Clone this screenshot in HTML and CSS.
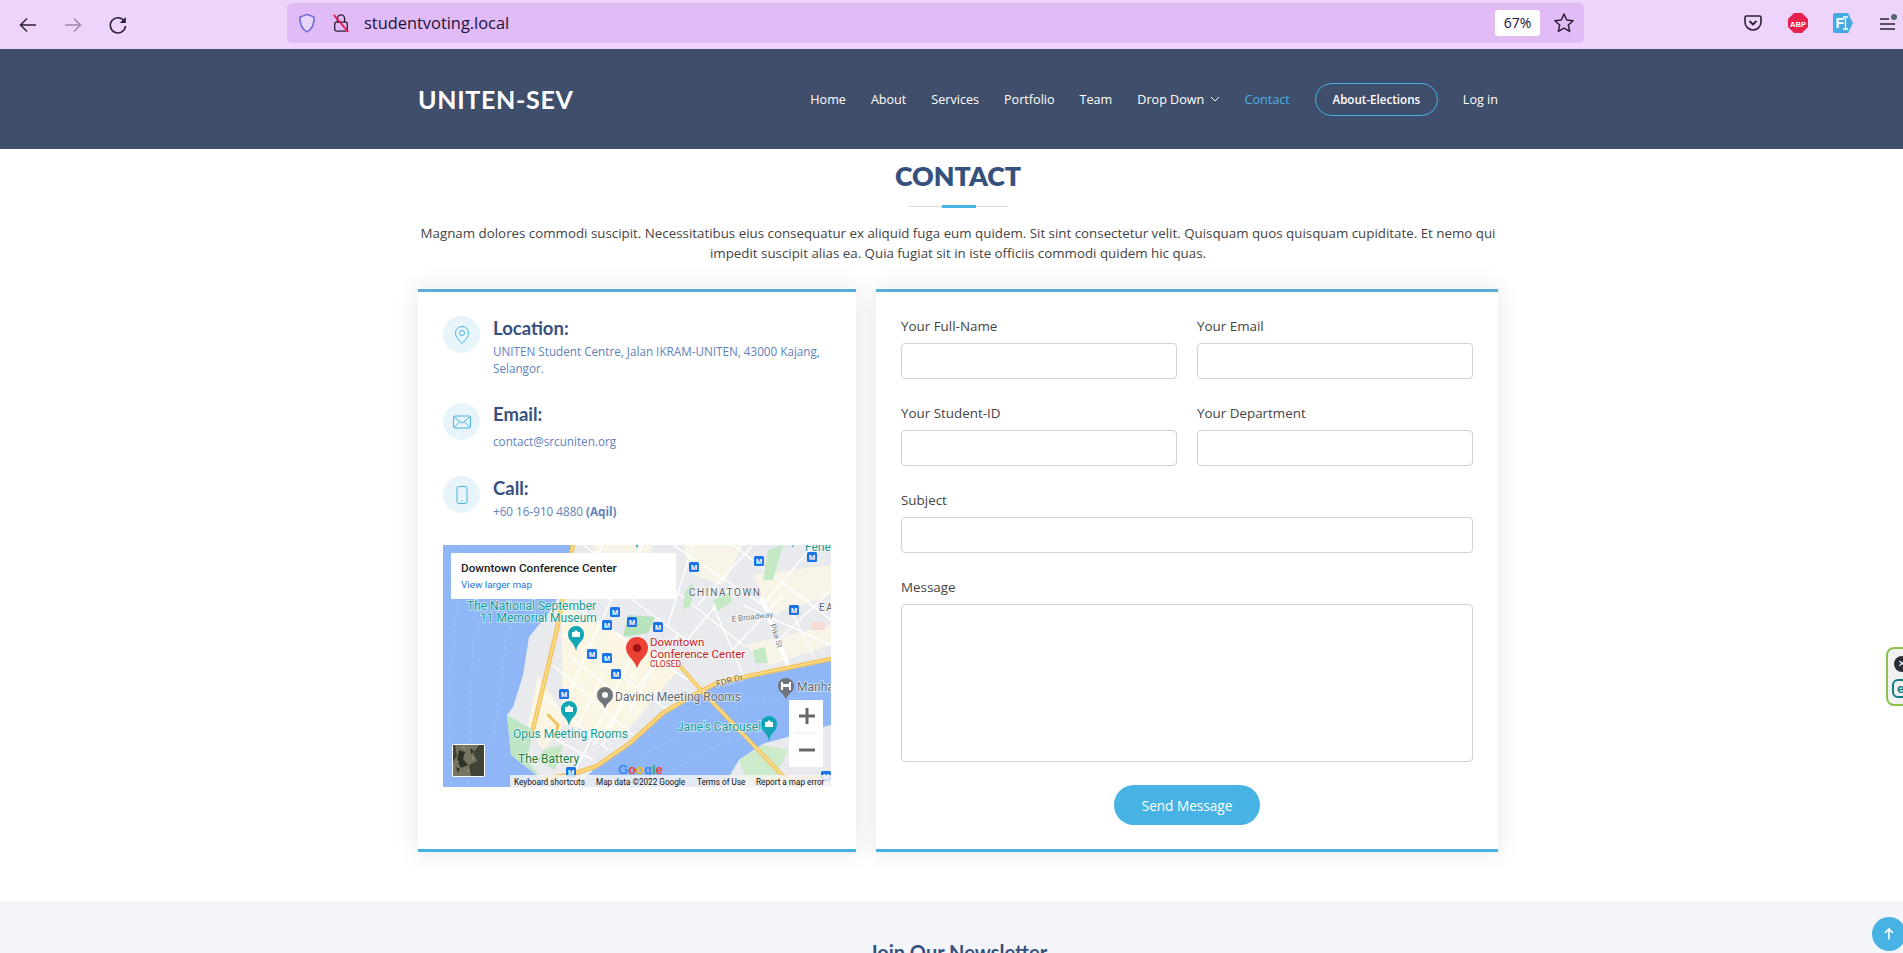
FILE: index.html
```html
<!DOCTYPE html>
<html lang="en">
<head>
<meta charset="utf-8">
<title>UNITEN-SEV Contact</title>
<link rel="stylesheet" href="styles.css">
</head>
<body>
<div class="toolbar">
  <div class="tb-nav">
    <svg class="tb-icon" viewBox="0 0 20 20"><path d="M18 10H2.500M9 3.500 2.500 10 9 16.500" fill="none" stroke="#2b1f33" stroke-width="1.500"/></svg>
    <svg class="tb-icon faded" viewBox="0 0 20 20"><path d="M2 10h15.500M11 3.500l6.500 6.500-6.500 6.500" fill="none" stroke="#2b1f33" stroke-width="1.500"/></svg>
    <svg class="tb-icon" viewBox="0 0 20 20"><path d="M16.500 6.500A7.600 7.600 0 1 0 17.500 11" fill="none" stroke="#2b1f33" stroke-width="1.600"/><path d="M17.800 2v6h-6z" fill="#2b1f33"/></svg>
  </div>
  <div class="urlbar">
    <svg class="shield" viewBox="0 0 20 22"><path d="M10 1.500 18 4.500c0 8-2 13-8 16.500C4 17.500 2 12.500 2 4.500z" fill="#e9d3fb" stroke="#5f63d8" stroke-width="1.600"/></svg>
    <svg class="lock" viewBox="0 0 20 22"><path d="M6 10V6a4 4 0 0 1 8 0v4" fill="none" stroke="#2b1f33" stroke-width="1.500"/><rect x="3" y="10" width="14" height="10" rx="2" fill="none" stroke="#2b1f33" stroke-width="1.500"/><path d="M2 2 18 21" stroke="#e5194f" stroke-width="2"/></svg>
    <span class="url">studentvoting.local</span>
    <span class="zoom-chip">67%</span>
    <svg class="star" viewBox="0 0 22 22"><path d="m11 2 2.700 6 6.500.7-4.900 4.300 1.400 6.400L11 16.100 5.300 19.400l1.400-6.400L1.800 8.700 8.300 8z" fill="none" stroke="#2b1f33" stroke-width="1.500" stroke-linejoin="round"/></svg>
  </div>
  <div class="tb-ext">
    <svg class="ext" viewBox="0 0 20 20"><path d="M3.500 3h13A1.500 1.500 0 0 1 18 4.500V9a8 8 0 0 1-16 0V4.500A1.500 1.500 0 0 1 3.500 3z" fill="none" stroke="#2b1f33" stroke-width="1.600"/><path d="m6.500 8 3.500 3.500L13.500 8" fill="none" stroke="#2b1f33" stroke-width="1.800"/></svg>
    <svg class="ext" viewBox="0 0 20 20"><path d="M6 0h8l6 6v8l-6 6H6l-6-6V6z" fill="#e8214f"/><text x="10" y="13.500" class="abp">ABP</text></svg>
    <svg class="ext" viewBox="0 0 20 20"><path d="M2 0h13l5 10-5 10H2a2 2 0 0 1-2-2V2a2 2 0 0 1 2-2z" fill="#47a9e4"/><text x="2.500" y="15" class="fi">F</text><path d="M10 4h5M10 16h5M12.500 4v12" stroke="#fff" stroke-width="1.300"/></svg>
    <svg class="ext burger" viewBox="0 0 20 20"><path d="M2 6h9M2 11h15M2 16h15" stroke="#2b1f33" stroke-width="1.500"/><circle cx="16" cy="4" r="3" fill="#4d6a6a"/></svg>
  </div>
</div>

<header class="site-header">
  <div class="container header-row">
    <a class="brand">UNITEN-SEV</a>
    <nav class="main-nav">
      <a>Home</a>
      <a>About</a>
      <a>Services</a>
      <a>Portfolio</a>
      <a>Team</a>
      <a class="drop">Drop Down <svg class="chev" viewBox="0 0 10 6"><path d="m1 1 4 4 4-4" fill="none" stroke="#fff" stroke-width="1"/></svg></a>
      <a class="active">Contact</a>
      <a class="pill">About-Elections</a>
      <a>Log in</a>
    </nav>
  </div>
</header>

<main class="contact">
  <div class="container">
    <div class="section-title">
      <h2>CONTACT</h2>
      <div class="rule"><span></span></div>
      <p>Magnam dolores commodi suscipit. Necessitatibus eius consequatur ex aliquid fuga eum quidem. Sit sint consectetur velit. Quisquam quos quisquam cupiditate. Et nemo qui impedit suscipit alias ea. Quia fugiat sit in iste officiis commodi quidem hic quas.</p>
    </div>
    <div class="contact-grid">
      <section class="card info">
        <div class="info-item">
          <span class="info-icon"><svg viewBox="0 0 20 20"><path d="M10 1.500a6.500 6.500 0 0 0-6.500 6.500c0 4 3.500 7.500 6.500 10.500 3-3 6.500-6.500 6.500-10.500A6.500 6.500 0 0 0 10 1.500z" fill="none" stroke="#47b2e4" stroke-width="1"/><circle cx="10" cy="8" r="2.500" fill="none" stroke="#47b2e4" stroke-width="1"/></svg></span>
          <div class="info-text">
            <h4>Location:</h4>
            <p>UNITEN Student Centre, Jalan IKRAM-UNITEN, 43000 Kajang, Selangor.</p>
          </div>
        </div>
        <div class="info-item">
          <span class="info-icon"><svg viewBox="0 0 20 20"><rect x="1.500" y="4" width="17" height="12" rx="1.500" fill="none" stroke="#47b2e4" stroke-width="1"/><path d="m1.800 5 8.200 6 8.200-6M2 15.500l5.800-6M18 15.500l-5.800-6" fill="none" stroke="#47b2e4" stroke-width="1"/></svg></span>
          <div class="info-text email">
            <h4>Email:</h4>
            <p>contact@srcuniten.org</p>
          </div>
        </div>
        <div class="info-item">
          <span class="info-icon"><svg viewBox="0 0 20 20"><rect x="5" y="1.500" width="10" height="17" rx="1.800" fill="none" stroke="#47b2e4" stroke-width="1"/><circle cx="10" cy="15.800" r=".7" fill="#47b2e4"/></svg></span>
          <div class="info-text">
            <h4>Call:</h4>
            <p>+60 16-910 4880 <b>(Aqil)</b></p>
          </div>
        </div>
        <svg class="map" viewBox="0 0 388 242">
          <defs>
            <g id="m"><rect x="-5" y="-5" width="10" height="10" rx="1.500" fill="#1a73e8"/><text x="0" y="3" class="mk">M</text></g>
            <g id="teal"><path d="M0 9C-2-1-8 0-8-8a8 8 0 0 1 16 0C8 0 2-1 0 9z" fill="#12a5b5"/><path d="M-4-5v-5h2l2-2 2 2h2v5z" fill="#fff"/></g>
          </defs>
          <rect width="388" height="242" fill="#e8eaed"/>
          <path d="M118 60 240 120 180 190 120 180ZM95 130 125 175 100 205 85 180Z" fill="#fbf6e4"/>
          <path d="M240 0h60l-20 40-30-10zM310 30l78-10v30l-60 20zM300 100l88-20v20l-60 20zM150 0h60l-10 30-40 20z" fill="#f8f4e8"/>
          <g stroke="#fff" stroke-width="1.500" fill="none">
            <path d="M130 60 245 135M120 90 225 165M110 120 190 190M100 150 165 205M170 40 270 115M200 20 300 100M230 0 335 70M290 0 388 75M150 200 235 90M175 40 120 160M200 90 130 230M240 100 290 40M280 115 340 50M330 100 388 45M250 0 225 80M310 0 255 60M370 0 320 60M300 60 388 100M140 0 210 50M160 0 130 50M200 0 165 55M270 60 300 130M345 60 370 110M125 110 200 170M160 130 130 190M105 190 150 215M190 130 160 200M215 110 185 170"/>
          </g>
          <path d="M318 52 348 128" stroke="#fff" stroke-width="4"/>
          <path d="M0 0H130L112 60 86 92 80 130 70 162 64 170 68 210 95 231 120 242H0z" fill="#8fb7f7"/>
          <path d="M388 112 320 128 274 138 254 148 220 168 187 198 154 221 134 242H280L296 215 320 199 388 180z" fill="#8fb7f7"/>
          <g stroke="#a6c4f8" stroke-width=".7" fill="none" stroke-dasharray="4 3"><path d="M55 0 30 100 25 242M90 0 62 100 50 200M20 0 8 120 8 242M200 210 290 160 380 150M230 225 320 175"/></g>
          <path d="M280 242 296 215 320 199 388 180V242z" fill="#e8eaed"/>
          <path d="M296 215 320 200 345 205 330 238 305 238z" fill="#cdeacb"/>
          <path d="M64 170 90 185 84 215 100 235 95 231 68 210z" fill="#bfe6c4"/>
          <path d="M100 205 120 200 112 225 95 215z" fill="#c5e8c5"/>
          <path d="M185 70 212 72 205 88 180 92z" fill="#b6e3ba"/>
          <path d="M242 46 250 38 248 60 240 65zM310 105 322 102 325 118 312 118zM270 55 285 48 290 56 275 66zM325 5 340 0 330 35 320 35z" fill="#c5e8c5"/>
          <rect x="368" y="77" width="14" height="8" fill="#f7dcd6"/>
          <g stroke="#f3c45c" fill="none" stroke-linejoin="round" stroke-linecap="round">
            <path d="M130 0 114 84 90 184" stroke-width="4.500"/>
            <path d="M388 114 320 128 274 138 254 148 220 168 187 198 154 221 130 229 100 234" stroke-width="4.500"/>
            <path d="M237 121 257 144 337 228 354 242" stroke-width="4"/>
            <path d="M105 170 115 180 112 192" stroke-width="3"/>
            <path d="M310 235 388 232" stroke-width="3"/>
          </g>
          <g stroke="#fbdd8e" fill="none" stroke-linejoin="round" stroke-linecap="round" stroke-width="1.600">
            <path d="M130 0 114 84 90 184"/>
            <path d="M388 114 320 128 274 138 254 148 220 168 187 198 154 221 130 229 100 234"/>
            <path d="M237 121 257 144 337 228 354 242"/>
          </g>
          <path d="M194 92a11 11 0 0 1 11 11c0 8-8 11-11 20-3-9-11-12-11-20a11 11 0 0 1 11-11z" fill="#ea4335"/>
          <circle cx="194" cy="103" r="4" fill="#a31512"/>
          <use href="#m" x="251" y="22"/><use href="#m" x="316" y="16"/><use href="#m" x="369" y="12"/>
          <use href="#m" x="172" y="67"/><use href="#m" x="189" y="77"/><use href="#m" x="164" y="80"/>
          <use href="#m" x="215" y="82"/><use href="#m" x="149" y="109"/><use href="#m" x="164" y="113"/>
          <use href="#m" x="173" y="129"/><use href="#m" x="121" y="149"/><use href="#m" x="128" y="227"/>
          <use href="#m" x="351" y="65"/><use href="#m" x="383" y="231"/>
          <use href="#teal" x="133" y="97"/><use href="#teal" x="126" y="172"/><use href="#teal" x="326" y="187"/><use href="#teal" x="194" y="-5"/><use href="#teal" x="350" y="-6"/>
          <path d="M162 164c-2-8-8-7-8-14a8 8 0 0 1 16 0c0 7-6 6-8 14z" fill="#70757a"/><circle cx="162" cy="150" r="3" fill="#fff"/>
          <path d="M343 155c-2-8-8-7-8-14a8 8 0 0 1 16 0c0 7-6 6-8 14z" fill="#70757a"/><path d="M338 137h2v2h6v-2h2v8h-2v-3h-6v3h-2z" fill="#fff"/>
          <text x="207" y="101" class="lbl red">Downtown</text>
          <text x="207" y="113" class="lbl red">Conference Center</text>
          <text x="207" y="122" class="lbl red small">CLOSED</text>
          <text x="246" y="51" class="lbl area">CHINATOWN</text>
          <text x="376" y="66" class="lbl area">EA</text>
          <text x="24" y="65" class="lbl teal">The National September</text>
          <text x="37" y="77" class="lbl teal">11 Memorial Museum</text>
          <text x="172" y="156" class="lbl gray">Davinci Meeting Rooms</text>
          <text x="70" y="193" class="lbl teal">Opus Meeting Rooms</text>
          <text x="234" y="186" class="lbl teal">Jane's Carousel</text>
          <text x="75" y="218" class="lbl green">The Battery</text>
          <text x="354" y="146" class="lbl gray">Manha</text>
          <text x="362" y="6" class="lbl teal">Fenel</text>
          <text transform="translate(289 77) rotate(-7)" class="lbl road">E Broadway</text>
          <text transform="translate(327 80) rotate(72)" class="lbl road">Pike St</text>
          <text transform="translate(274 142) rotate(-15)" class="lbl fdr">FDR Dr</text>
          <text x="175" y="229" class="goog"><tspan fill="#4285f4">G</tspan><tspan fill="#ea4335">o</tspan><tspan fill="#fbbc05">o</tspan><tspan fill="#4285f4">g</tspan><tspan fill="#34a853">l</tspan><tspan fill="#ea4335">e</tspan></text>
          <rect x="8" y="8" width="225" height="46" fill="#fff"/>
          <text x="18" y="27" class="card-title">Downtown Conference Center</text>
          <text x="18" y="43" class="card-link">View larger map</text>
          <rect x="9" y="199" width="33" height="33" rx="2" fill="#fff"/>
          <rect x="10" y="200" width="31" height="31" fill="#3f4436"/>
          <path d="M12 200h24l-6 8 4 8-8 4 2 11H10v-14l4-6z" fill="#77745f"/><path d="M16 205l6 2-2 7 5 6-7 3-4-7zM27 203l4 3-3 3zM13 222l4 2-2 4z" fill="#2f3329"/><path d="M19 201l3 3M29 212l2 2M14 216l2 1M24 225l2 1" stroke="#a9a690"/>
          <rect x="346" y="155" width="34" height="67" fill="#fff"/>
          <path d="M352 188h22" stroke="#e6e6e6"/>
          <path d="M356 171h16M364 163v16M356 205h16" stroke="#666" stroke-width="3"/>
          <path d="M67 230h321v12H67z" fill="#f5f5f5" fill-opacity=".85"/>
          <text x="71" y="240" class="attr">Keyboard shortcuts</text>
          <text x="153" y="240" class="attr">Map data ©2022 Google</text>
          <text x="254" y="240" class="attr">Terms of Use</text>
          <text x="313" y="240" class="attr">Report a map error</text>
        </svg>
      </section>

      <form class="card form">
        <div class="form-grid">
          <label class="field"><span>Your Full-Name</span><input type="text"></label>
          <label class="field"><span>Your Email</span><input type="text"></label>
          <label class="field"><span>Your Student-ID</span><input type="text"></label>
          <label class="field"><span>Your Department</span><input type="text"></label>
          <label class="field wide"><span>Subject</span><input type="text"></label>
          <label class="field wide"><span>Message</span><textarea></textarea></label>
        </div>
        <div class="form-actions"><button type="button">Send Message</button></div>
      </form>
    </div>
  </div>
</main>

<section class="newsletter">
  <h4>Join Our Newsletter</h4>
</section>

<div class="eset"><span class="eset-x">✕</span><span class="eset-e">e</span></div>
<a class="to-top"><svg viewBox="0 0 14 14"><path d="M7 12.500V2M3 6l4-4 4 4" fill="none" stroke="#fff" stroke-width="1.600"/></svg></a>
</body>
</html>
```
FILE: styles.css
```css
* { box-sizing: border-box; }
html, body { margin: 0; height: 953px; overflow: hidden; }
body { font-family: "Open Sans", sans-serif; color: #444; background: #fff; }

.toolbar { height: 49px; background: #eed4fb; display: flex; align-items: center; }
.tb-nav { width: 287px; display: flex; gap: 25px; padding-left: 18px; align-items: center; }
.tb-icon { width: 20px; height: 20px; }
.faded { opacity: .4; }
.urlbar { width: 1297px; height: 40px; background: #e1bbf6; border-radius: 5px; display: flex; align-items: center; padding: 0 9px 0 11px; margin-top: -4px; }
.shield { width: 18px; height: 20px; }
.lock { width: 18px; height: 20px; margin-left: 16px; }
.url { font-family: "Open Sans", sans-serif; font-size: 16.400px; color: #20123a; margin-left: 14px; flex: 1; }
.zoom-chip { width: 45px; height: 26px; background: #fff; border-radius: 3px; font-size: 14px; line-height: 26px; text-align: center; color: #20123a; }
.star { width: 22px; height: 22px; margin-left: 13px; }
.tb-ext { flex: 1; display: flex; align-items: center; justify-content: flex-end; gap: 25px; padding-right: 5px; margin-top: -4px; }
.ext { width: 20px; height: 20px; }
.abp { font: 700 7.500px "Liberation Sans", sans-serif; fill: #fff; text-anchor: middle; }
.fi { font: 700 14px "Liberation Sans", sans-serif; fill: #fff; }

.site-header { height: 100px; background: #3f4e6b; }
.container { width: 1080px; margin-left: 418px; }
.header-row { height: 100%; display: flex; align-items: center; justify-content: space-between; }
.brand { font-family: Lato, sans-serif; font-weight: 700; font-size: 25px; letter-spacing: .7px; color: #fff; }
.main-nav { display: flex; align-items: center; gap: 25px; }
.main-nav a { font-size: 12.600px; color: #fff; white-space: nowrap; }
.main-nav a.active { color: #47b2e4; }
.chev { width: 10px; height: 6px; margin: 0 0 2px 2px; }
.main-nav a.pill { height: 33px; width: 123px; border: 1px solid #47b2e4; border-radius: 17px; font-size: 11.600px; line-height: 31px; text-align: center; font-weight: 600; }

.contact { height: 752px; }
.section-title { text-align: center; }
.section-title h2 { margin: 0; padding-top: 8px; font-family: Lato, sans-serif; font-weight: 800; font-size: 26.700px; line-height: 38px; color: #37517e; }
.rule { position: relative; width: 100px; height: 1px; margin: 11px auto 0; background: #ddd; }
.rule span { position: absolute; left: 34px; top: -1px; width: 34px; height: 3px; background: #47b2e4; }
.section-title p { margin: 16px 0 0; font-size: 13.330px; line-height: 20px; color: #444; }

.contact-grid { display: grid; grid-template-columns: 438px 622px; gap: 20px; margin-top: 26px; height: 563px; }
.card { background: #fff; border-top: 3px solid #58aed3; border-bottom: 3px solid #47b2e4; box-shadow: 0 0 24px rgba(0,0,0,.1); }

.info { padding: 24px 25px 0; }
.info-item { display: flex; gap: 13px; margin-bottom: 25px; }
.info-icon { flex: none; width: 37px; height: 37px; border-radius: 50%; background: #e7f5fb; display: flex; align-items: center; justify-content: center; }
.info-icon svg { width: 20px; height: 20px; }
.info-text h4 { margin: 0; font-family: Lato, sans-serif; font-weight: 700; font-size: 18.500px; line-height: 24px; color: #37517e; }
.info-text p { margin: 3px 0 1px; font-size: 11.700px; line-height: 17px; color: #6182ba; }
.info-text.email h4 { margin-top: -1px; }
.info-text.email p { margin-top: 7px; }
.map { display: block; width: 388px; height: 242px; margin-top: -1px; }

.lbl { font-family: Roboto, sans-serif; font-size: 12px; paint-order: stroke; stroke: #fff; stroke-width: 1.500px; stroke-opacity: .7; }
.red { fill: #c5221f; font-size: 11.500px; }
.small { font-size: 8.500px; }
.area { fill: #5f6368; font-size: 10px; letter-spacing: 1.600px; }
.teal { fill: #129a8f; }
.green { fill: #188038; }
.gray { fill: #5f6b72; }
.road { fill: #70757a; font-size: 8px; }
.fdr { fill: #7a5a1a; font-size: 9px; }
.mk { font: 700 7px Roboto, sans-serif; fill: #fff; text-anchor: middle; }
.goog { font: 600 13px "Liberation Sans", sans-serif; }
.card-title { font: 500 11.700px Roboto, sans-serif; fill: #202124; }
.card-link { font: 400 9.900px Roboto, sans-serif; fill: #1a73e8; }
.attr { font: 400 8.200px Roboto, sans-serif; fill: #111; }

.form { padding: 24px 25px 0; }
.form-grid { display: grid; grid-template-columns: 276px 276px; gap: 24px 20px; }
.field { display: block; }
.field span { display: block; font-size: 13.400px; line-height: 20px; color: #444; margin-bottom: 7px; }
.field.wide { grid-column: 1 / -1; }
.field input, .field textarea { display: block; width: 100%; border: 1px solid #ced4da; border-radius: 4px; background: #fff; }
.field input { height: 36px; }
.field textarea { height: 158px; resize: none; }
.form-actions { text-align: center; margin-top: 23px; }
.form-actions button { width: 146px; height: 40px; border: 0; border-radius: 20px; background: #47b2e4; color: #fff; font-family: "Open Sans", sans-serif; font-size: 13.600px; }

.newsletter { height: 52px; background: #f3f5fa; text-align: center; padding-top: 36px; overflow: hidden; }
.newsletter h4 { margin: 0 0 0 13px; font-family: Lato, sans-serif; font-weight: 700; font-size: 20px; line-height: 30px; color: #37517e; }

.eset { position: absolute; left: 1886px; top: 647px; width: 30px; height: 59px; border: 2px solid #8dc04a; border-radius: 8px; background: #f1f1f1; }
.eset-x { position: absolute; left: 6px; top: 7px; width: 16px; height: 16px; border-radius: 50%; background: #2a2d34; color: #fff; font: 700 10px/16px "DejaVu Sans", sans-serif; text-align: center; }
.eset-e { position: absolute; left: 4px; top: 30px; width: 20px; height: 19px; border: 2px solid #0d7d85; border-radius: 6px; font: 700 13px/15px "Liberation Sans", sans-serif; color: #0d7d85; padding-left: 3px; }
.to-top { position: absolute; left: 1872px; top: 917px; width: 34px; height: 34px; border-radius: 50%; background: #47b2e4; display: flex; align-items: center; justify-content: center; }
.to-top svg { width: 14px; height: 14px; }
```
